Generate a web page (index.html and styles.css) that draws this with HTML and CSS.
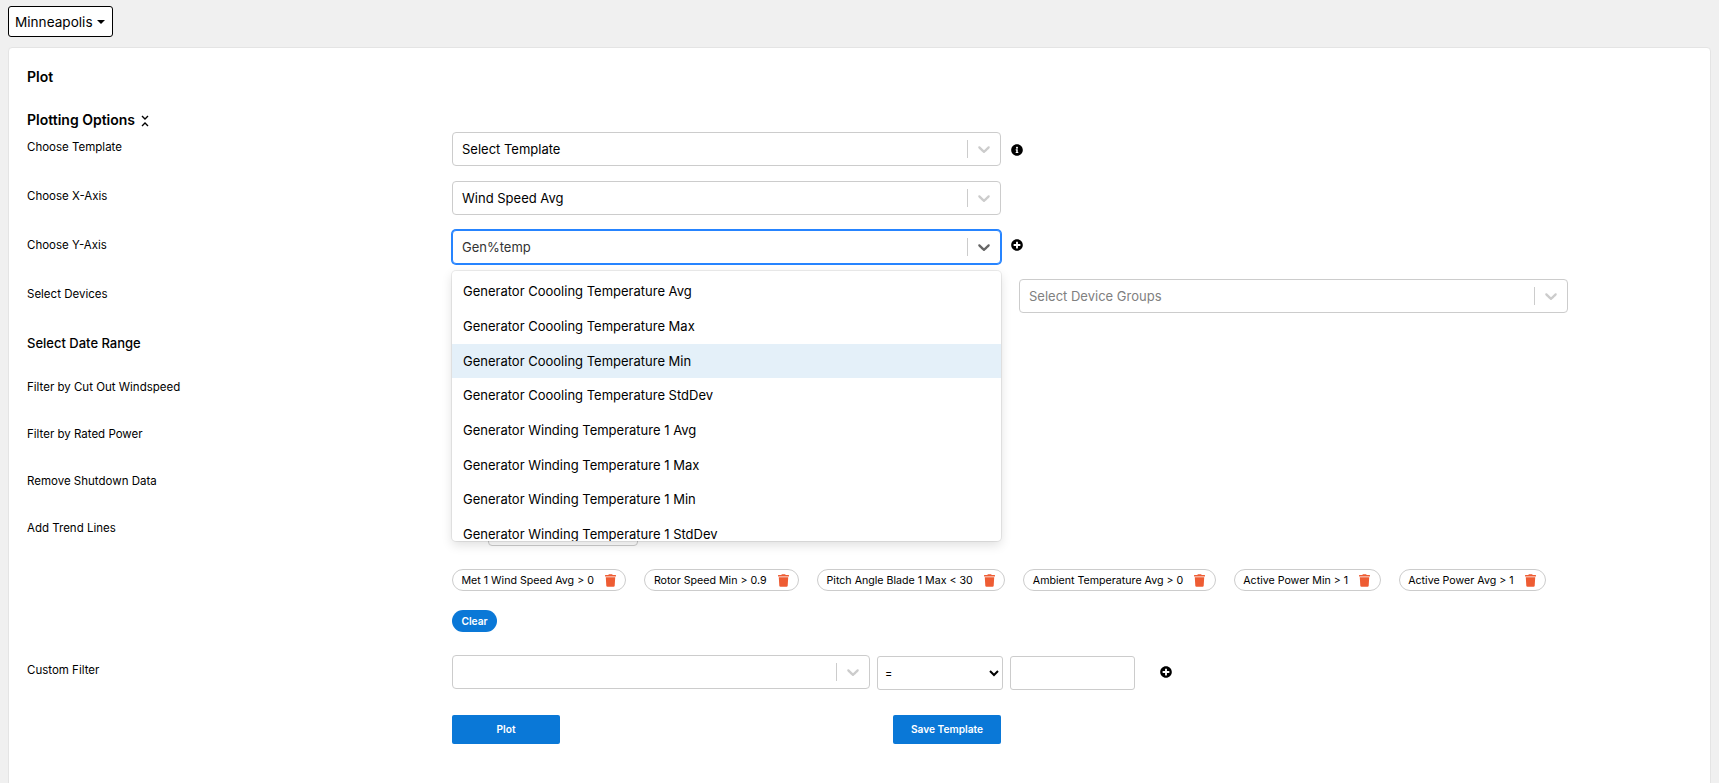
FILE: index.html
```html
<!DOCTYPE html>
<html lang="en">
<head>
<meta charset="utf-8">
<title>Plot</title>
<link rel="stylesheet" href="styles.css">
</head>
<body>
<svg class="sprite" aria-hidden="true">
  <symbol id="chev" viewBox="0 0 20 20"><path d="M4.516 7.548c0.436-0.446 1.043-0.481 1.576 0l3.908 3.747 3.908-3.747c0.533-0.481 1.141-0.446 1.574 0 0.436 0.445 0.408 1.197 0 1.615-0.406 0.418-4.695 4.502-4.695 4.502-0.217 0.223-0.502 0.335-0.787 0.335s-0.57-0.112-0.789-0.335c0 0-4.287-4.084-4.695-4.502s-0.436-1.17 0-1.615z"/></symbol>
  <symbol id="trash" viewBox="0 0 448 512"><path d="M432 32H312l-9.4-18.7A24 24 0 0 0 281.1 0H166.8a23.72 23.72 0 0 0-21.4 13.3L136 32H16A16 16 0 0 0 0 48v32a16 16 0 0 0 16 16h416a16 16 0 0 0 16-16V48a16 16 0 0 0-16-16zM53.2 467a48 48 0 0 0 47.9 45h245.8a48 48 0 0 0 47.9-45L416 128H32z"/></symbol>
  <symbol id="info" viewBox="0 0 512 512"><path d="M256 8C119 8 8 119.1 8 256c0 137 111 248 248 248s248-111 248-248C504 119.1 393 8 256 8zm0 110c23.2 0 42 18.8 42 42s-18.8 42-42 42-42-18.8-42-42 18.8-42 42-42zm56 254c0 6.6-5.4 12-12 12h-88c-6.6 0-12-5.4-12-12v-24c0-6.6 5.4-12 12-12h12v-64h-12c-6.6 0-12-5.4-12-12v-24c0-6.6 5.4-12 12-12h64c6.6 0 12 5.4 12 12v100h12c6.6 0 12 5.4 12 12v24z"/></symbol>
  <symbol id="plus" viewBox="0 0 512 512"><path d="M256 8C119 8 8 119 8 256s111 248 248 248 248-111 248-248S393 8 256 8zm144 276c0 6.6-5.4 12-12 12h-92v92c0 6.6-5.4 12-12 12h-56c-6.6 0-12-5.4-12-12v-92h-92c-6.6 0-12-5.4-12-12v-56c0-6.6 5.4-12 12-12h92v-92c0-6.6 5.4-12 12-12h56c6.6 0 12 5.4 12 12v92h92c6.6 0 12 5.4 12 12v56z"/></symbol>
</svg>

<header class="topbar">
  <button class="site-btn">Minneapolis<span class="caret"></span></button>
</header>

<main class="card">
  <h1 class="title">Plot</h1>
  <h2 class="section">Plotting Options
    <svg class="sort" viewBox="0 0 8 12"><path d="M1 1l3 3 3-3M1 11l3-3 3 3"/></svg>
  </h2>

  <div class="row">
    <label class="label">Choose Template</label>
    <div class="control">
      <div class="rs"><span class="rs-value">Select Template</span><span class="rs-sep"></span><svg class="rs-chev"><use href="#chev"/></svg></div>
      <svg class="dot"><use href="#info"/></svg>
    </div>
  </div>

  <div class="row">
    <label class="label">Choose X-Axis</label>
    <div class="control">
      <div class="rs"><span class="rs-value">Wind Speed Avg</span><span class="rs-sep"></span><svg class="rs-chev"><use href="#chev"/></svg></div>
    </div>
  </div>

  <div class="row">
    <label class="label">Choose Y-Axis</label>
    <div class="control">
      <div class="rs-wrap">
        <div class="rs focus"><span class="rs-value typed">Gen%temp</span><span class="rs-sep"></span><svg class="rs-chev"><use href="#chev"/></svg></div>
        <ul class="menu">
          <li>Generator Coooling Temperature Avg</li>
          <li>Generator Coooling Temperature Max</li>
          <li class="active">Generator Coooling Temperature Min</li>
          <li>Generator Coooling Temperature StdDev</li>
          <li>Generator Winding Temperature 1 Avg</li>
          <li>Generator Winding Temperature 1 Max</li>
          <li>Generator Winding Temperature 1 Min</li>
          <li>Generator Winding Temperature 1 StdDev</li>
        </ul>
      </div>
      <svg class="dot dot-plus"><use href="#plus"/></svg>
    </div>
  </div>

  <div class="row">
    <label class="label">Select Devices</label>
    <div class="control devices">
      <div class="rs"></div>
      <div class="rs"><span class="rs-value placeholder">Select Device Groups</span><span class="rs-sep"></span><svg class="rs-chev"><use href="#chev"/></svg></div>
    </div>
  </div>

  <h3 class="date-title">Select Date Range</h3>

  <div class="filter-row"><label class="label">Filter by Cut Out Windspeed</label></div>
  <div class="filter-row"><label class="label">Filter by Rated Power</label></div>
  <div class="filter-row"><label class="label">Remove Shutdown Data</label></div>
  <div class="filter-row trend"><label class="label">Add Trend Lines</label><div class="trend-box"></div></div>

  <div class="chips">
    <span class="chip">Met 1 Wind Speed Avg &gt; 0<svg class="trash"><use href="#trash"/></svg></span>
    <span class="chip">Rotor Speed Min &gt; 0.9<svg class="trash"><use href="#trash"/></svg></span>
    <span class="chip">Pitch Angle Blade 1 Max &lt; 30<svg class="trash"><use href="#trash"/></svg></span>
    <span class="chip">Ambient Temperature Avg &gt; 0<svg class="trash"><use href="#trash"/></svg></span>
    <span class="chip">Active Power Min &gt; 1<svg class="trash"><use href="#trash"/></svg></span>
    <span class="chip">Active Power Avg &gt; 1<svg class="trash"><use href="#trash"/></svg></span>
  </div>

  <div class="clear-row"><button class="clear">Clear</button></div>

  <div class="row custom">
    <label class="label">Custom Filter</label>
    <div class="control">
      <div class="rs rs-short"><span class="rs-value"></span><span class="rs-sep"></span><svg class="rs-chev"><use href="#chev"/></svg></div>
      <select class="op"><option>=</option></select>
      <input class="val" type="text">
      <svg class="dot dot-custom"><use href="#plus"/></svg>
    </div>
  </div>

  <div class="actions">
    <button class="primary">Plot</button>
    <button class="primary">Save Template</button>
  </div>
</main>
</body>
</html>
```

FILE: styles.css
```css
* { box-sizing: border-box; }
html, body { height: 100%; }
body {
  margin: 0;
  background: #f0f0f0;
  color: #000;
  font-family: Inter, "Liberation Sans", sans-serif;
  overflow: hidden;
}
.sprite { display: none; }

.topbar { height: 47px; padding: 6px 8px 0; }
.site-btn {
  display: flex;
  align-items: center;
  width: 105px;
  height: 31px;
  padding: 0 6px;
  background: #fff;
  border: 1px solid #000;
  border-radius: 3px;
  font: 13.6px Inter, "Liberation Sans", sans-serif;
  color: #000;
}
.caret {
  margin-left: 4px;
  border-top: 4px solid #000;
  border-left: 4px solid transparent;
  border-right: 4px solid transparent;
}

.card {
  margin: 0 8px;
  height: 760px;
  padding: 0 18px;
  background: #fff;
  border: 1px solid #e4e4e4;
  border-radius: 4px 4px 0 0;
}
.title {
  margin: 0;
  padding-top: 20px;
  height: 61px;
  font-size: 14px;
  line-height: 18px;
  font-weight: 600;
}
.section {
  display: flex;
  align-items: flex-start;
  margin: 0;
  height: 23px;
  padding-top: 2px;
  font-size: 14px;
  line-height: 18px;
  font-weight: 600;
}
.sort {
  width: 8px;
  height: 12px;
  margin: 4px 0 0 6px;
  fill: none;
  stroke: #000;
  stroke-width: 1.4;
}

.row {
  display: flex;
  height: 49px;
}
.label {
  flex: none;
  width: 425px;
  padding-top: 7px;
  font-size: 11.5px;
  line-height: 17px;
}
.control { display: flex; align-items: flex-start; }
.devices { gap: 18px; }

.rs {
  display: flex;
  align-items: center;
  width: 549px;
  height: 34.4px;
  background: #fff;
  border: 1px solid #ccc;
  border-radius: 4px;
  font-size: 13px;
}
.rs.focus {
  border-color: #2684ff;
  box-shadow: 0 0 0 1px #2684ff;
}
.rs-value { flex: 1; padding-left: 9px; }
.rs-value.typed { color: #333; }
.rs-value.placeholder { color: #808080; }
.rs-sep { width: 1px; height: 18px; background: #ccc; }
.rs-chev {
  width: 20px;
  height: 20px;
  margin: 0 6px;
  fill: #ccc;
}
.focus .rs-chev { fill: #666; }
.rs-short { width: 418px; }

.dot { width: 12px; height: 12px; margin: 11.5px 0 0 9.5px; fill: #000; }
.dot-plus { margin-top: 8.5px; }

.rs-wrap { position: relative; }
.menu {
  position: absolute;
  z-index: 5;
  top: 40.7px;
  left: 0;
  width: 549px;
  height: 270px;
  margin: 0;
  padding: 3.5px 0;
  overflow: hidden;
  list-style: none;
  background: #fff;
  border-radius: 4px;
  box-shadow: 0 0 0 1px rgba(0,0,0,.07), 0 4px 11px rgba(0,0,0,.13);
  font-size: 13px;
}
.menu li {
  height: 34.7px;
  padding: 0 11px;
  line-height: 34.7px;
  white-space: nowrap;
}
.menu .active { background: #e4f0f9; }

.date-title {
  margin: 0;
  height: 51px;
  padding-top: 5px;
  font-size: 13px;
  line-height: 20px;
  font-weight: 500;
}
.filter-row { height: 47px; }
.filter-row .label { display: block; padding-top: 0; }
.filter-row.trend { display: flex; height: 49px; }
.trend-box {
  width: 150px;
  height: 23px;
  margin-left: 36px;
  margin-top: 3px;
  border: 1px solid #ccc;
  border-radius: 4px;
}

.chips {
  display: flex;
  gap: 18px;
  margin-left: 425px;
}
.chip {
  display: flex;
  align-items: center;
  justify-content: space-between;
  height: 22.4px;
  padding: 0 9.5px 0 8.5px;
  border: 1px solid #ccc;
  border-radius: 12px;
  font-size: 10.65px;
  white-space: nowrap;
}
.trash { width: 11px; height: 13px; margin-left: 11px; fill: #ee5c33; }

.clear-row { padding: 19px 0 0 425px; height: 63.6px; }
.clear {
  display: block;
  width: 45px;
  height: 22px;
  padding: 0;
  background: #0a78d7;
  color: #fff;
  border: 0;
  border-radius: 11px;
  font: 600 10.2px Inter, "Liberation Sans", sans-serif;
}

.custom { height: 60px; }
.custom .label { padding-top: 7px; }
.custom .control { gap: 7px; }
.custom .dot-custom { margin: 11.5px 0 0 17.5px; }
.op {
  width: 126px;
  height: 34px;
  margin-top: 1px;
  padding: 0 3px;
  background: #fff;
  border: 1px solid #ccc;
  border-radius: 3px;
  font: 11px Inter, "Liberation Sans", sans-serif;
  color: #000;
}
.val {
  width: 125px;
  height: 34px;
  margin-top: 1px;
  background: #fff;
  border: 1px solid #ccc;
  border-radius: 3px;
}

.actions {
  display: flex;
  justify-content: space-between;
  width: 549px;
  margin-left: 425px;
}
.primary {
  width: 108px;
  height: 29px;
  padding: 0;
  background: #0a78d7;
  color: #fff;
  border: 0;
  border-radius: 2px;
  font: 600 10.2px Inter, "Liberation Sans", sans-serif;
}
```
